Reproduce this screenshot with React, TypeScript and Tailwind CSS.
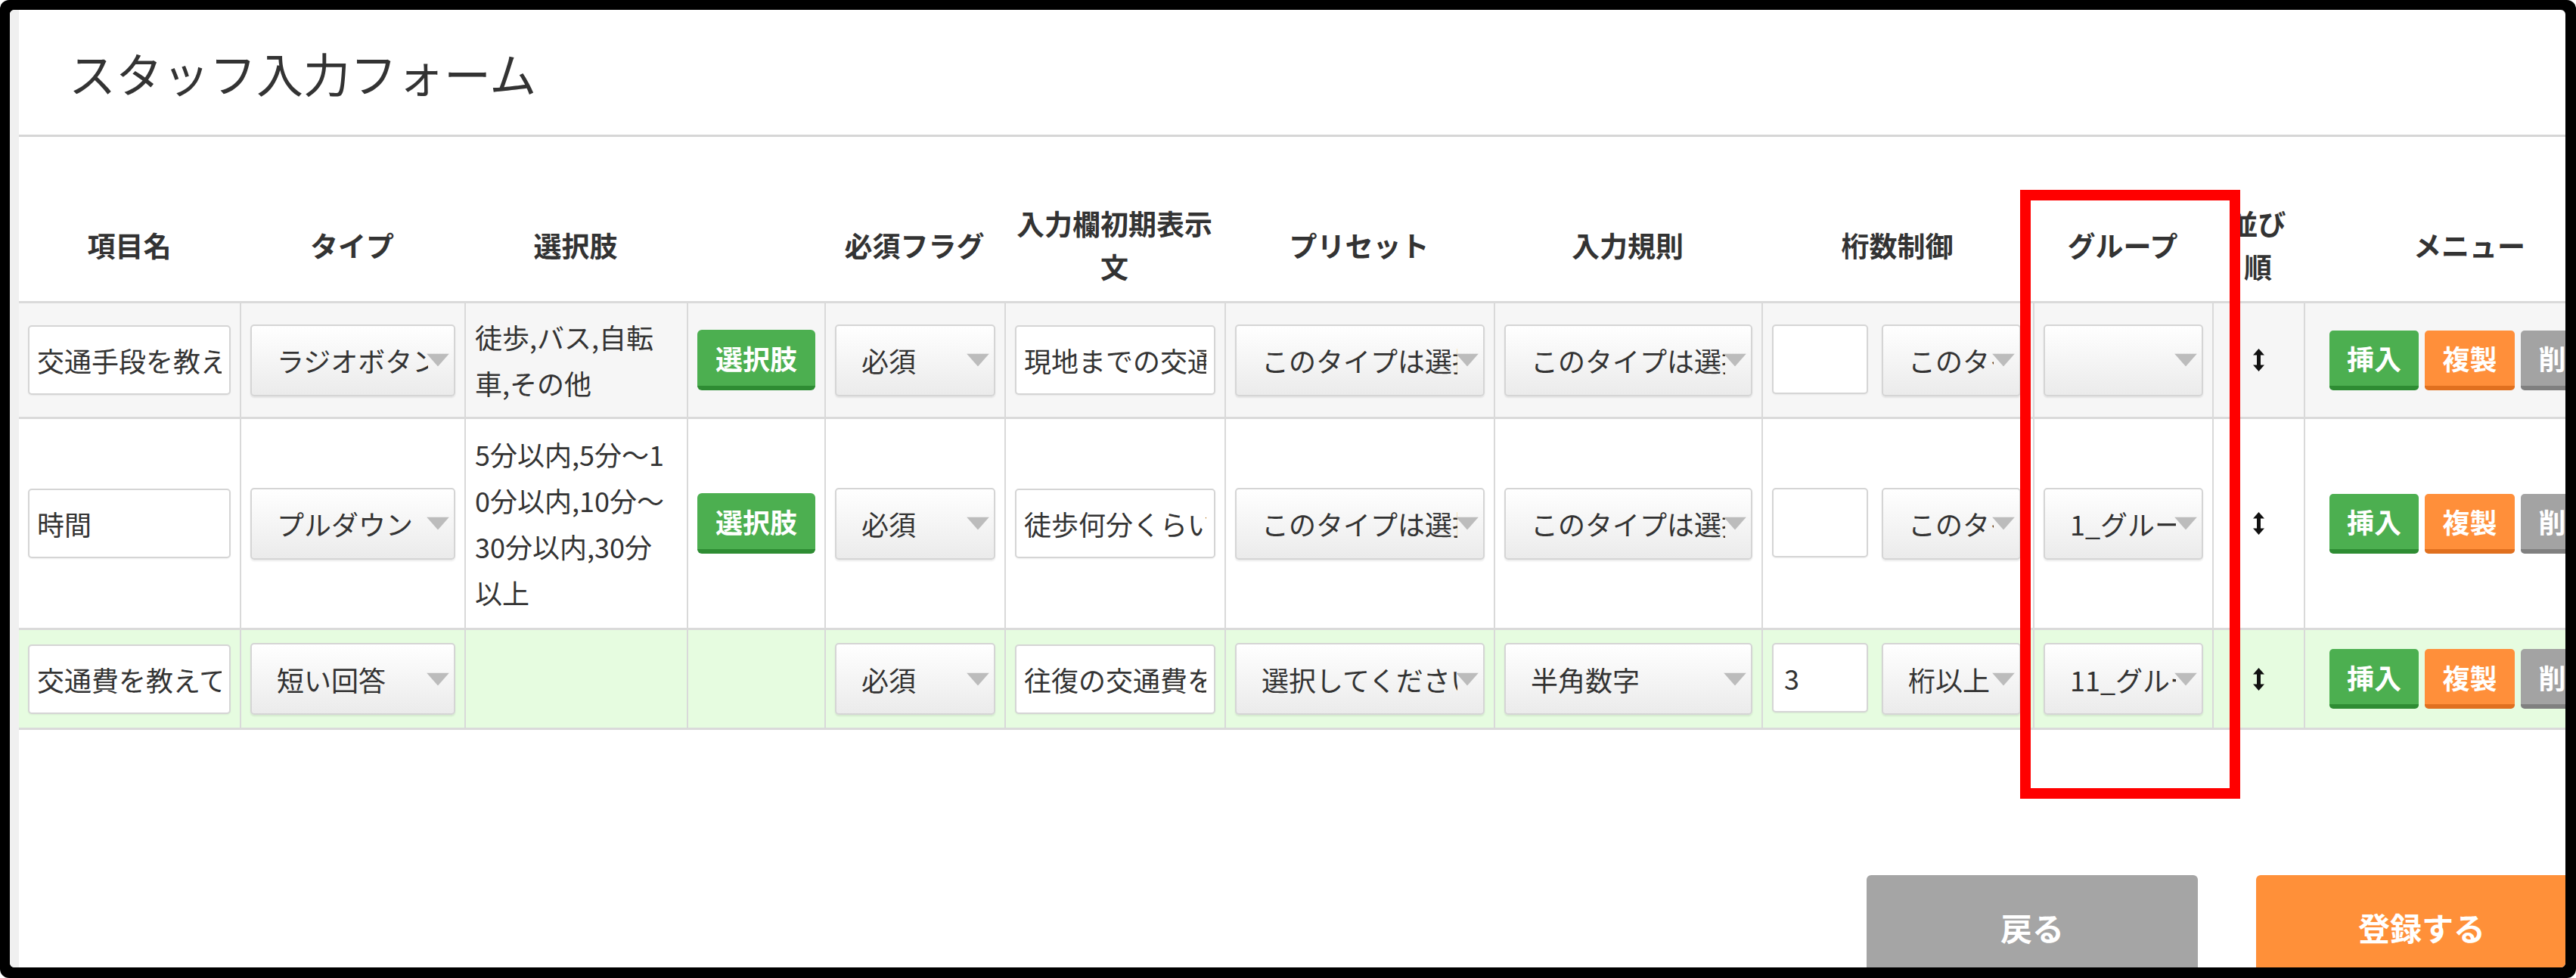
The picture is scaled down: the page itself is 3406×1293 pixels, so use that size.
import React from 'react';

const COLS =
  'grid grid-cols-[292px_297px_294px_182px_238px_291px_356px_354px_359px_237px_121px_438px]';

const Arrow = () => (
  <svg className="absolute right-[6px] top-1/2 -translate-y-1/2" width="30" height="17" viewBox="0 0 30 17">
    <path d="M0 0H30L15 17Z" fill="#bcbcbc" />
  </svg>
);

const Select = ({ text }: { text: string }) => (
  <div className="relative flex h-[95px] w-full min-w-0 items-center rounded-[5px] border-2 border-[#d5d5d5] bg-linear-to-b from-white to-[#ebebeb] pl-[33px] pr-[34px] shadow-[0_2px_2px_rgba(0,0,0,0.08)]">
    <span className="block overflow-hidden whitespace-nowrap">{text}</span>
    <Arrow />
  </div>
);

const TextBox = ({ value, className }: { value: string; className?: string }) => (
  <input
    readOnly
    defaultValue={value}
    className={`h-[92px] min-w-0 rounded-[5px] border-2 border-[#d5d5d5] bg-white pl-[10px] pr-[10px] text-[#333] shadow-[0_1px_2px_rgba(0,0,0,0.06)] outline-none ${className ?? 'w-full'}`}
  />
);

const SortIcon = () => (
  <svg width="15" height="30" viewBox="0 0 15 30">
    <path d="M7.5 0L15 8.5H10V21.5H15L7.5 30L0 21.5H5V8.5H0Z" fill="#111" />
  </svg>
);

const Cell = ({ children, center }: { children?: React.ReactNode; center?: boolean }) => (
  <div
    className={`flex min-w-0 items-center border-l-2 border-[#d9d9d9] px-[12px] first:border-l-0 ${
      center ? 'justify-center' : ''
    }`}
  >
    {children}
  </div>
);

const MenuButtons = () => (
  <div className="flex gap-[8px] font-bold text-white">
    <div className="flex h-[79px] w-[118px] shrink-0 items-center justify-center rounded-[5px] border-b-[6px] border-[#2e8c33] bg-[#4caf50]">
      挿入
    </div>
    <div className="flex h-[79px] w-[119px] shrink-0 items-center justify-center rounded-[5px] border-b-[6px] border-[#e0701f] bg-[#ff8f3a]">
      複製
    </div>
    <div className="flex h-[79px] w-[119px] shrink-0 items-center justify-center rounded-[5px] border-b-[6px] border-[#808080] bg-[#a3a3a3]">
      削除
    </div>
  </div>
);

const ChoiceButton = () => (
  <div className="flex h-[80px] w-full items-center justify-center rounded-[6px] border-b-[6px] border-[#2e8c33] bg-[#4caf50] font-bold text-white">
    選択肢
  </div>
);

interface RowData {
  name: string;
  type: string;
  choices: string[];
  placeholder: string;
  preset: string;
  rule: string;
  digits: string;
  digitRule: string;
  group: string;
}

const rows: RowData[] = [
  {
    name: '交通手段を教えてください',
    type: 'ラジオボタン',
    choices: ['徒歩,バス,自転', '車,その他'],
    placeholder: '現地までの交通手段',
    preset: 'このタイプは選択できません',
    rule: 'このタイプは選択できません',
    digits: '',
    digitRule: 'このタイプは選択できません',
    group: '',
  },
  {
    name: '時間',
    type: 'プルダウン',
    choices: ['5分以内,5分～1', '0分以内,10分～', '30分以内,30分', '以上'],
    placeholder: '徒歩何分くらいですか',
    preset: 'このタイプは選択できません',
    rule: 'このタイプは選択できません',
    digits: '',
    digitRule: 'このタイプは選択できません',
    group: '1_グループ',
  },
  {
    name: '交通費を教えてください',
    type: '短い回答',
    choices: [],
    placeholder: '往復の交通費を入力',
    preset: '選択してください',
    rule: '半角数字',
    digits: '3',
    digitRule: '桁以上',
    group: '11_グループ',
  },
];

const rowStyles = [
  'h-[153px] bg-[#f6f6f6]',
  'h-[279px] bg-white',
  'h-[132px] bg-[#e6fce0]',
];

const Row = ({ row, className }: { row: RowData; className: string }) => (
  <div className={`${COLS} border-b-[3px] border-[#dadada] ${className}`}>
    <Cell>
      <TextBox value={row.name} />
    </Cell>
    <Cell>
      <Select text={row.type} />
    </Cell>
    <Cell>
      <div className="leading-[61px]">
        {row.choices.map((c) => (
          <span key={c} className="block whitespace-nowrap">
            {c}
          </span>
        ))}
      </div>
    </Cell>
    <Cell>{row.choices.length > 0 && <ChoiceButton />}</Cell>
    <Cell>
      <Select text="必須" />
    </Cell>
    <Cell>
      <TextBox value={row.placeholder} />
    </Cell>
    <Cell>
      <Select text={row.preset} />
    </Cell>
    <Cell>
      <Select text={row.rule} />
    </Cell>
    <Cell>
      <div className="flex w-full gap-[18px] pr-[4px]">
        <TextBox value={row.digits} className="w-[127px] shrink-0 pl-[14px]" />
        <Select text={row.digitRule} />
      </div>
    </Cell>
    <Cell>
      <Select text={row.group} />
    </Cell>
    <Cell center>
      <SortIcon />
    </Cell>
    <Cell center>
      <MenuButtons />
    </Cell>
  </div>
);

const headers: React.ReactNode[] = [
  '項目名',
  'タイプ',
  '選択肢',
  '',
  '必須フラグ',
  <>
    入力欄初期表示
    <br />文
  </>,
  'プリセット',
  '入力規則',
  '桁数制御',
  'グループ',
  <>
    並び
    <br />順
  </>,
  'メニュー',
];

export default function App() {
  return (
    <div className="h-[1293px] w-[3406px] rounded-[12px] bg-black pb-[14px] pl-[13px] pr-[14px] pt-[13px] font-['Noto_Sans_CJK_JP','Noto_Sans',sans-serif] text-[36px] text-[#333]">
      <div className="relative flex h-full w-full overflow-hidden rounded-[6px] bg-white">
        <div className="w-[12px] shrink-0 bg-[#f0f0f0]" />
        <div className="flex min-w-0 flex-1 flex-col">
          <div className="flex h-[165px] shrink-0 items-center pl-[66px] text-[62px] leading-none text-[#333]">
            スタッフ入力フォーム
          </div>
          <div className="h-[3px] shrink-0 bg-[#d6d6d6]" />

          <div className="mt-[69px]">
            <div className={`${COLS} h-[151px] border-b-[3px] border-[#dadada] text-[37px] font-bold leading-[57px]`}>
              {headers.map((h, i) => (
                <div key={i} className="flex items-center justify-center whitespace-nowrap text-center">
                  <div>{h}</div>
                </div>
              ))}
            </div>
            {rows.map((r, i) => (
              <Row key={i} row={r} className={rowStyles[i]} />
            ))}
          </div>

          <div className="mt-[192px] flex shrink-0 gap-[77px] pl-[2443px] text-[42px] font-bold text-white">
            <div className="flex h-[136px] w-[438px] shrink-0 items-center justify-center rounded-t-[6px] bg-[#a5a5a5]">
              戻る
            </div>
            <div className="flex h-[136px] w-[438px] shrink-0 items-center justify-center rounded-t-[6px] bg-[#ff9039]">
              登録する
            </div>
          </div>
        </div>

        {/* annotation frame */}
        <div className="pointer-events-none absolute left-[2658px] top-[238px] z-10 h-[805px] w-[291px] border-[14px] border-[#ff0000]" />
      </div>
    </div>
  );
}
